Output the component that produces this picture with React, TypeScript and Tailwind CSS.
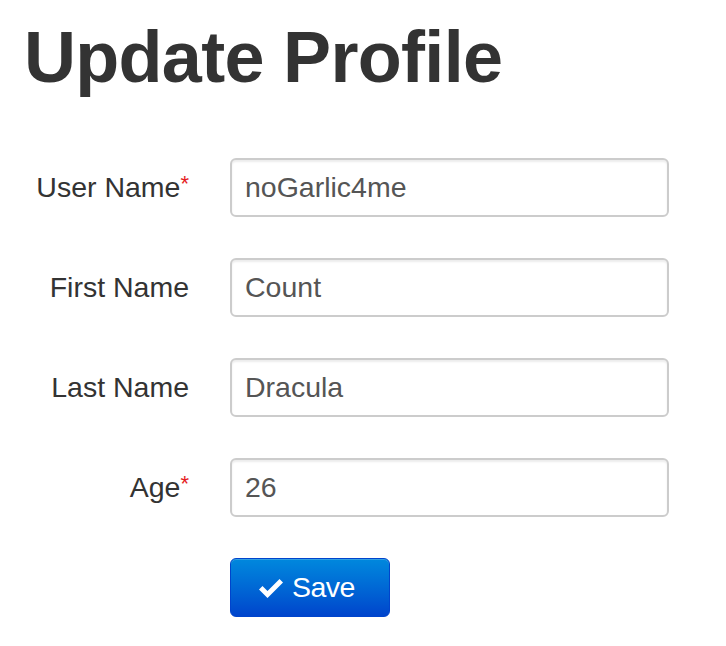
import React from "react";

const fields = [
  { label: "User Name", value: "noGarlic4me", required: true },
  { label: "First Name", value: "Count", required: false },
  { label: "Last Name", value: "Dracula", required: false },
  { label: "Age", value: "26", required: true },
];

const App: React.FC = () => {
  return (
    <div className="min-h-[646px] w-[726px] bg-white font-['Liberation_Sans',Arial,sans-serif] text-[#333]">
      <h1 className="pl-[24px] pt-[18px] text-[72px] font-bold leading-[79px] tracking-[-0.7px]">
        Update Profile
      </h1>
      <form className="mt-[61px] flex flex-col gap-[41px]">
        {fields.map((f) => (
          <div key={f.label} className="flex items-center">
            <label className="w-[191px] pr-[2px] text-right text-[28.5px] leading-none">
              {f.label}
              {f.required && <span className="text-[#e51c23] text-[22px] align-[6px]">*</span>}
            </label>
            <input
              readOnly
              value={f.value}
              className="ml-[39px] h-[59px] w-[439px] rounded-[6px] border-2 border-[#ccc] bg-white px-[13px] text-[28.5px] text-[#555] shadow-[inset_0_2px_2px_rgba(0,0,0,0.075)] outline-none"
            />
          </div>
        ))}
        <div className="pl-[230px]">
          <button
            type="button"
            className="flex h-[59px] w-[160px] items-center gap-[8px] rounded-[6px] border border-[#0044cc] bg-gradient-to-b from-[#0088dd] to-[#0044cc] pl-[27px] text-[28.5px] text-white shadow-[inset_0_1px_0_rgba(255,255,255,0.2)]"
          >
            <svg width="26" height="21" viewBox="0 0 26 21" className="mt-[1px]">
              <path d="M1 11.5 L4.5 8 L9.5 13 L21.5 1 L25 4.5 L9.5 20 Z" fill="white" />
            </svg>
            <span className="tracking-[-0.5px]">Save</span>
          </button>
        </div>
      </form>
    </div>
  );
};

export default App;
